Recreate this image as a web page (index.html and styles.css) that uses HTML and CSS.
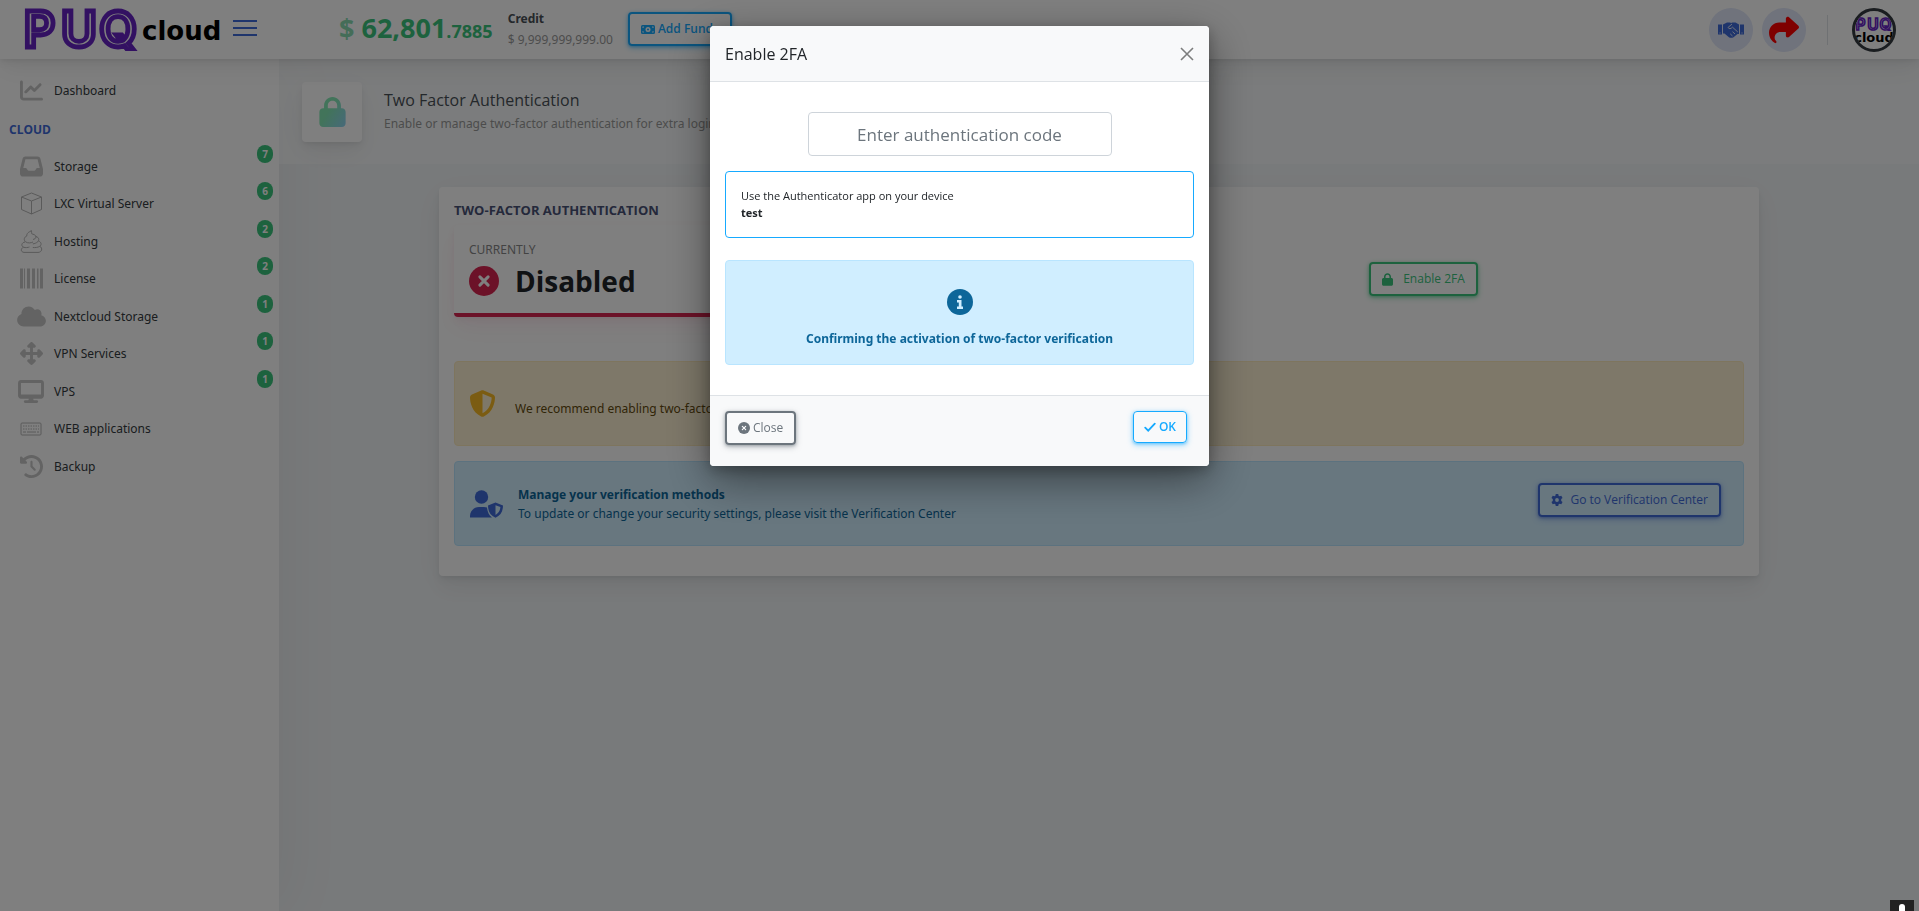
FILE: index.html
```html
<!DOCTYPE html>
<html lang="en">
<head>
<meta charset="utf-8">
<title>Two Factor Authentication</title>
<link rel="stylesheet" href="styles.css">
</head>
<body>
<svg class="defs" aria-hidden="true">
  <defs>
    <linearGradient id="lockfill" x1="0" y1="0.3" x2="1" y2="1"><stop offset="0.3" stop-color="#84e8b4"/><stop offset="1" stop-color="#8fd3f4"/></linearGradient>
    <symbol id="lock" viewBox="0 0 448 512"><path d="M144 144v48H304V144c0-44.200-35.800-80-80-80s-80 35.800-80 80zM80 192V144C80 64.500 144.500 0 224 0s144 64.500 144 144v48h16c35.300 0 64 28.700 64 64V448c0 35.300-28.700 64-64 64H64c-35.300 0-64-28.700-64-64V256c0-35.300 28.700-64 64-64H80z"/></symbol>
    <symbol id="xcircle" viewBox="0 0 24 24"><circle cx="12" cy="12" r="12"/><path d="M8.700 8.700l6.600 6.600M15.300 8.700l-6.600 6.600" fill="none" stroke="var(--hole)" stroke-width="2.400" stroke-linecap="round"/></symbol>
    <symbol id="logo" viewBox="0 0 124 46"><text class="logo-text" x="1 40 80" y="42">PUQ</text></symbol>
  </defs>
</svg>

<header class="header">
  <div class="brand">
    <a class="logo" href="#" aria-label="PUQcloud">
      <svg class="logo-mark" viewBox="0 0 124 46"><use href="#logo"/></svg>
      <span class="logo-word">cloud</span>
    </a>
    <button class="burger" aria-label="Toggle menu"><span></span><span></span><span></span></button>
  </div>
  <div class="balance">
    <div class="amount"><span class="currency">$</span> 62,801<small>.7885</small></div>
    <div class="credit"><b>Credit</b><span>$ 9,999,999,999.00</span></div>
    <button class="btn btn-info thick bold"><svg class="i-bill" viewBox="0 0 28 18"><rect width="28" height="18" rx="3"/><circle cx="14" cy="9" r="5" fill="#fff"/><path d="M3 3h3a3 3 0 0 1-3 3zM25 3v3a3 3 0 0 1-3-3zM3 15v-3a3 3 0 0 1 3 3zM25 15h-3a3 3 0 0 1 3-3z" fill="#fff"/><circle cx="14" cy="9" r="2"/></svg>Add Funds</button>
  </div>
  <div class="tools">
    <a class="round" href="#" aria-label="Partners"><svg class="i-hands" viewBox="0 0 26 16"><path d="M0 2.500h4v10H0zM22 2.500h4v10h-4z"/><path d="M5 2.500L9 .5h3l1 .6L14.500.5h3L21 2.500v9.500h-1.500l-4 3.200c-1.300.8-3 .8-4.300.2L6.500 11.500H5z"/><path d="M14 2L10 5.500c.8 1.800 3 1.300 4.500-.3L19.800 10M17 12l-2.500-2.300M14.500 14l-2.300-2.200" fill="none" stroke="#e0e6f8" stroke-width="1"/><path d="M1.500 10.500h1v1h-1zM23.500 10.500h1v1h-1z" fill="#e0e6f8"/></svg></a>
    <a class="round" href="#" aria-label="Share"><svg class="i-share" viewBox="0 0 512 512"><path d="M307 34.800c-11.500 5.100-19 16.600-19 29.200v64H176C78.800 128 0 206.800 0 304C0 417.300 81.500 467.900 100.200 478.100c2.500 1.400 5.300 1.900 8.100 1.900c10.900 0 19.700-8.900 19.700-19.700c0-7.500-4.300-14.400-9.800-19.500C108.800 431.900 96 414.400 96 384c0-53 43-96 96-96h96v64c0 12.600 7.400 24.100 19 29.200s25 3 34.400-5.400l160-144c6.700-6.100 10.600-14.700 10.600-23.800s-3.800-17.700-10.600-23.800l-160-144c-9.400-8.500-22.900-10.600-34.400-5.400z"/></svg></a>
    <span class="divider"></span>
    <a class="avatar" href="#" aria-label="Account"><svg viewBox="0 0 124 46"><use href="#logo"/></svg><span>cloud</span></a>
  </div>
</header>

<div class="shell">
  <nav class="sidebar">
    <a class="item" href="#"><span class="ico"><svg class="w23" viewBox="0 0 512 512"><path d="M64 64c0-17.700-14.300-32-32-32S0 46.300 0 64V400c0 44.200 35.800 80 80 80H480c17.700 0 32-14.300 32-32s-14.300-32-32-32H80c-8.800 0-16-7.200-16-16V64zm406.600 86.600c12.500-12.500 12.500-32.800 0-45.300s-32.800-12.500-45.300 0L320 210.700l-57.400-57.400c-12.500-12.500-32.800-12.500-45.300 0l-112 112c-12.500 12.500-12.500 32.800 0 45.300s32.800 12.500 45.300 0L240 221.300l57.400 57.400c12.500 12.500 32.800 12.500 45.300 0l128-128z"/></svg></span>Dashboard</a>
    <h2>CLOUD</h2>
    <div class="group">
      <a class="item" href="#"><span class="ico"><svg class="w23" viewBox="0 0 512 512"><path d="M121 32C91.600 32 66 52 58.900 80.500L1.900 308.400C.6 313.500 0 318.700 0 323.900V416c0 35.300 28.700 64 64 64H448c35.300 0 64-28.700 64-64V323.900c0-5.200-.6-10.400-1.900-15.500l-57-227.900C446 52 420.400 32 391 32H121zm0 64H391l48 192H387.800c-12.100 0-23.200 6.800-28.600 17.700l-14.300 28.600c-5.400 10.800-16.500 17.700-28.600 17.700H195.800c-12.100 0-23.200-6.800-28.600-17.700l-14.300-28.600c-5.400-10.800-16.500-17.700-28.600-17.700H73L121 96z"/></svg></span>Storage<span class="badge">7</span></a>
      <a class="item" href="#"><span class="ico"><svg class="w23 line" viewBox="0 0 23 23"><path d="M11.500 1L21.500 5v12.500l-10 4.500-10-4.500V5zM1.500 5l10 4 10-4M11.500 9v13"/></svg></span>LXC Virtual Server<span class="badge">6</span></a>
      <a class="item" href="#"><span class="ico"><svg class="w23 line" viewBox="0 0 23 23"><path d="M12 .8C8.500 1.800 6.500 3.500 6.800 6 4 7 3.500 10 5.500 11.800 8 13.500 11 13 13 12M11 .6C12.300 2 11 3 11.800 3.800c1.200.6 4 .7 4.200 3.200 0 1.500-1.500 2-3 2.500M16 6.500c3 .8 3.500 3.500 1.800 5.200-1.300 1.300-3.300 2-5 2.200M5 12C1.500 12.500.8 16 3.500 17.200 5.500 18 8 17.500 9.500 17M18.500 11c3 1 3.300 4 1.300 5.300-2 1.300-5 1.400-7 1.200M3.500 17.200C.5 18.500.5 22 4 22.400h14c4 0 5-4.500 1.800-6.100"/></svg></span>Hosting<span class="badge">2</span></a>
      <a class="item" href="#"><span class="ico"><svg class="w23" viewBox="0 0 23 23"><path d="M0 1.500h3v20H0zM4 1.500h1v20H4zM7 1.500h3v20H7zM12 1.500h3v20h-3zM17 1.500h1v20h-1zM20 1.500h3v20h-3zM18.500 1.500h.5v20h-.5z"/></svg></span>License<span class="badge">2</span></a>
      <a class="item" href="#"><span class="ico"><svg class="w29" viewBox="0 0 640 512"><path d="M0 336c0 79.500 64.500 144 144 144H512c70.700 0 128-57.300 128-128c0-61.900-44-113.600-102.400-125.400c4.100-10.700 6.400-22.400 6.400-34.600c0-53-43-96-96-96c-19.700 0-38.100 6-53.300 16.200C367 64.200 315.300 32 256 32C167.600 32 96 103.600 96 192c0 2.700.1 5.400.2 8.100C40.200 219.800 0 273.200 0 336z"/></svg></span>Nextcloud Storage<span class="badge">1</span></a>
      <a class="item" href="#"><span class="ico"><svg class="w23" viewBox="0 0 512 512"><path d="M278.600 9.400c-12.500-12.500-32.800-12.500-45.300 0l-64 64c-9.200 9.200-11.900 22.900-6.900 34.900s16.600 19.800 29.600 19.800h32v96H128V192c0-12.900-7.800-24.600-19.800-29.600s-25.700-2.200-34.900 6.900l-64 64c-12.500 12.500-12.500 32.800 0 45.300l64 64c9.200 9.200 22.900 11.900 34.900 6.900s19.800-16.600 19.800-29.600V288h96v96H192c-12.900 0-24.600 7.800-29.600 19.800s-2.200 25.700 6.900 34.900l64 64c12.500 12.500 32.800 12.500 45.300 0l64-64c9.200-9.200 11.900-22.900 6.900-34.900s-16.600-19.800-29.600-19.800H288V288h96v32c0 12.900 7.800 24.600 19.800 29.600s25.700 2.200 34.900-6.900l64-64c12.500-12.500 12.500-32.800 0-45.300l-64-64c-9.200-9.200-22.900-11.900-34.900-6.900s-19.800 16.600-19.800 29.600v32H288V128h32c12.900 0 24.600-7.800 29.600-19.800s2.200-25.700-6.900-34.900l-64-64z"/></svg></span>VPN Services<span class="badge">1</span></a>
      <a class="item" href="#"><span class="ico"><svg class="w26" viewBox="0 0 576 512"><path d="M64 0C28.700 0 0 28.700 0 64V352c0 35.300 28.700 64 64 64H240l-10.700 32H160c-17.700 0-32 14.300-32 32s14.300 32 32 32H416c17.700 0 32-14.300 32-32s-14.300-32-32-32H346.700L336 416H512c35.300 0 64-28.700 64-64V64c0-35.300-28.700-64-64-64H64zM512 64V320H64V64H512z"/></svg></span>VPS<span class="badge">1</span></a>
      <a class="item" href="#"><span class="ico"><svg class="w23 line" viewBox="0 0 23 23"><rect x="1" y="6" width="20" height="12" rx="1"/><path d="M3 9h16M3 12h16" stroke-dasharray="1.500 1"/><path d="M3 15h3M7 15h9M17 15h2"/></svg></span>WEB applications</a>
      <a class="item" href="#"><span class="ico"><svg class="w23" viewBox="0 0 512 512"><path d="M75 75L41 41C25.900 25.900 0 36.600 0 57.900V168c0 13.300 10.700 24 24 24H134.100c21.400 0 32.100-25.900 17-41l-30.800-30.800C155 85.500 203 64 256 64c106 0 192 86 192 192s-86 192-192 192c-40.800 0-78.600-12.700-109.700-34.400c-14.500-10.100-34.400-6.600-44.600 7.900s-6.600 34.400 7.900 44.600C151.200 495 201.700 512 256 512c141.400 0 256-114.600 256-256S397.400 0 256 0C185.300 0 121.300 28.700 75 75zm181 53c-13.300 0-24 10.700-24 24V256c0 6.400 2.500 12.500 7 17l72 72c9.400 9.400 24.600 9.400 33.900 0s9.400-24.600 0-33.900l-65-65V152c0-13.300-10.700-24-24-24z"/></svg></span>Backup</a>
    </div>
  </nav>

  <main class="main">
    <section class="page-title">
      <span class="title-icon"><svg><use href="#lock"/></svg></span>
      <div>
        <h1>Two Factor Authentication</h1>
        <p>Enable or manage two-factor authentication for extra login security</p>
      </div>
    </section>

    <section class="card">
      <h3>TWO-FACTOR AUTHENTICATION</h3>
      <div class="status-row">
        <div class="status">
          <span class="status-label">CURRENTLY</span>
          <div class="status-value"><svg><use href="#xcircle"/></svg>Disabled</div>
        </div>
        <div class="status-action"><button class="btn btn-success thick"><svg class="i-lock"><use href="#lock"/></svg>Enable 2FA</button></div>
      </div>
      <div class="alert warn">
        <svg class="i-shield" viewBox="16 0 480 512"><path d="M256 0c4.600 0 9.200 1 13.400 2.900L457.700 82.800c22 9.300 38.400 31 38.300 57.200c-.5 99.200-41.300 280.700-213.600 363.200c-16.700 8-36.100 8-52.800 0C57.300 420.700 16.500 239.200 16 140c-.1-26.200 16.300-47.900 38.300-57.200L242.700 2.900C246.800 1 251.400 0 256 0zm0 66.800V444.800C394 378 431.100 230.100 432 141.400L256 66.800z"/></svg>
        <p>We recommend enabling two-factor authentication for better account security</p>
      </div>
      <div class="alert info">
        <svg class="i-user" viewBox="0 0 33 28"><circle cx="11.500" cy="7" r="6.700"/><path d="M0 27.500v-1.500c0-5 4-9 9-9h5c1 0 2 .2 3 .5.300 4 2 7.800 5 10z"/><path fill-rule="evenodd" d="M25.500 12.500l7.500 3c0 6-2.500 10-7.500 12.300-5-2.300-7.500-6.300-7.500-12.300zM25.500 15.200v9.700c3-1.700 4.600-4.300 4.900-7.800z"/></svg>
        <p><b>Manage your verification methods</b><br>To update or change your security settings, please visit the Verification Center</p>
        <button class="btn btn-primary thick"><svg class="i-gear" viewBox="0 0 24 24"><path fill-rule="evenodd" d="M9.500 0h5l.7 3.500 2 1.200 3.400-1.200 2.500 4.300L20.400 10.200v3.600l2.700 2.400-2.500 4.300-3.400-1.200-2 1.200-.7 3.500h-5l-.7-3.500-2-1.200-3.400 1.200L.9 16.200l2.700-2.400v-3.600L.9 7.800l2.500-4.300 3.400 1.200 2-1.200zM12 8.200a3.800 3.800 0 1 0 0 7.600 3.800 3.800 0 0 0 0-7.600z"/></svg>Go to Verification Center</button>
      </div>
    </section>
  </main>
</div>

<div class="backdrop"></div>

<div class="modal-layer">
  <div class="modal" role="dialog" aria-modal="true" aria-labelledby="modal-title">
    <div class="modal-head">
      <h4 id="modal-title">Enable 2FA</h4>
      <button class="close-x" aria-label="Close"><svg viewBox="0 0 14 14"><path d="M1 1l12 12M13 1L1 13"/></svg></button>
    </div>
    <div class="modal-body">
      <input class="code" type="text" aria-label="Authentication code" placeholder="Enter authentication code">
      <div class="hint">Use the Authenticator app on your device<br><b>test</b></div>
      <div class="notice">
        <svg viewBox="0 0 26 26"><circle cx="13" cy="13" r="13"/><path d="M10 11h4.500v6.500H16V20h-6v-2.500h1.800v-4H10z" fill="#d0eeff"/><circle cx="13" cy="8" r="1.800" fill="#d0eeff"/></svg>
        <b>Confirming the activation of two-factor verification</b>
      </div>
    </div>
    <div class="modal-foot">
      <button class="btn btn-secondary thick"><svg class="i-x"><use href="#xcircle"/></svg>Close</button>
      <button class="btn btn-info bold ok"><svg class="i-check" viewBox="0 0 12 12"><path d="M1.200 6.600l3 3 6.600-7" fill="none" stroke="currentColor" stroke-width="1.800" stroke-linecap="round"/></svg>OK</button>
    </div>
  </div>
</div>

<div class="corner"><svg viewBox="0 0 6 12"><rect width="6" height="16" rx="3"/></svg></div>
</body>
</html>
```
FILE: styles.css
```css
* { box-sizing: border-box; }
body {
  margin: 0;
  min-height: 100vh;
  overflow: hidden;
  display: flex;
  flex-direction: column;
  background: #f1f4f6;
  color: #212529;
  font: 12px/18px "Noto Sans", "Open Sans", sans-serif;
}
h1, h2, h3, h4, p { margin: 0; font-size: inherit; }
a { color: inherit; text-decoration: none; }
svg { fill: currentColor; flex: none; display: block; }
.defs { position: absolute; width: 0; height: 0; }

/* Header */
.header {
  position: relative;
  z-index: 2;
  display: flex;
  height: 59px;
  background: #fff;
  box-shadow: 0 7px 33px rgba(4, 9, 20, .03), 0 14px 21px rgba(4, 9, 20, .03), 0 4px 8px rgba(4, 9, 20, .05), 0 2px 3px rgba(4, 9, 20, .03);
}
.brand {
  width: 279px;
  padding: 0 22px;
  display: flex;
  justify-content: space-between;
  align-items: flex-start;
}
.logo { display: flex; padding-top: 7px; }
.logo-mark { width: 120px; height: 44px; }
.logo-text {
  font: 600 51px Inter, sans-serif;
  fill: #fff;
  stroke: #6622c4;
  stroke-width: 5px;
}
.logo-word { font: bold 26px/42px "DejaVu Sans", sans-serif; color: #000; padding-top: 3px; }
.burger {
  display: flex;
  flex-direction: column;
  gap: 5px;
  width: 24px;
  margin-top: 20px;
  padding: 0;
  border: 0;
  background: none;
}
.burger span { width: 24px; height: 2px; background: #3f6ad8; }
.balance {
  display: flex;
  align-items: center;
  margin-left: 38px;
  padding: 0 22px;
  height: 58px;
  border-radius: 15px;
}
.amount { font: 700 27px/36px "Open Sans", "Noto Sans", sans-serif; color: #3ac47d; margin-right: 15px; }
.amount small { font-size: 18px; }
.currency { opacity: .6; }
.credit { display: flex; flex-direction: column; gap: 3px; margin-right: 15px; color: #495057; }
.credit span { color: #999; }
.tools { display: flex; align-items: center; margin-left: auto; padding-right: 23px; }
.round {
  width: 44px;
  height: 44px;
  margin-right: 9px;
  border-radius: 50%;
  background: #e0e6f8;
  display: grid;
  place-items: center;
}
.i-hands { width: 26px; height: 16px; fill: #3f6ad8; }
.i-share { width: 30px; height: 30px; fill: #f00; }
.divider { width: 1px; height: 30px; margin: 0 24px 0 12px; background: #dee2e6; }
.avatar {
  width: 44px;
  height: 44px;
  border: 3px solid #343a40;
  border-radius: 50%;
  overflow: hidden;
  display: flex;
  flex-direction: column;
  align-items: center;
  color: #000;
  font: bold 13px/14px "DejaVu Sans", sans-serif;
}
.avatar svg { width: 38px; height: 14px; margin-top: 6px; }

/* Sidebar */
.shell { display: flex; flex: 1; }
.sidebar {
  width: 279px;
  padding-top: 13px;
  background: #fff;
  box-shadow: 7px 0 60px rgba(8, 10, 12, .05);
}
.item {
  position: relative;
  display: flex;
  align-items: center;
  height: 37px;
  padding-left: 15px;
  color: #343a40;
}
.group .item:nth-child(even) { margin-bottom: 1px; }
.ico { width: 32px; margin-right: 7px; display: grid; place-items: center; color: #c6c6c6; }
.w23 { width: 23px; height: 23px; }
.w26 { width: 26px; height: 23px; }
.w29 { width: 29px; height: 23px; }
.line { fill: none; stroke: #b4b4b4; stroke-width: 1; }
.sidebar h2 { padding: 12px 9px 0; height: 39px; font: 700 12px/18px "Open Sans", "Noto Sans", sans-serif; color: #3f6ad8; }
.badge {
  position: absolute;
  right: 6px;
  top: -3px;
  width: 16px;
  height: 18px;
  border-radius: 9px;
  background: #3ac47d;
  color: #fff;
  font-size: 10px;
  font-weight: 700;
  text-align: center;
}

/* Main */
.main { flex: 1; min-width: 0; }
.page-title {
  display: flex;
  align-items: center;
  gap: 22px;
  height: 105px;
  padding: 0 23px;
  background: rgba(255, 255, 255, .45);
}
.title-icon {
  width: 60px;
  height: 60px;
  border-radius: 4px;
  background: #fff;
  display: grid;
  place-items: center;
  box-shadow: 0 7px 33px rgba(4, 9, 20, .03), 0 14px 21px rgba(4, 9, 20, .03), 0 4px 8px rgba(4, 9, 20, .05), 0 2px 3px rgba(4, 9, 20, .03);
}
.title-icon svg { width: 27px; height: 30px; fill: url(#lockfill); }
.page-title h1 { font: 400 16px/24px "Open Sans", "Noto Sans", sans-serif; color: #495057; }
.page-title p { line-height: 24px; color: #999; }
.card {
  max-width: 1320px;
  margin: 23px auto 0;
  padding: 15px;
  border-radius: 4px;
  background: #fff;
  box-shadow: 0 7px 33px rgba(4, 9, 20, .03), 0 14px 21px rgba(4, 9, 20, .03), 0 4px 8px rgba(4, 9, 20, .05), 0 2px 3px rgba(4, 9, 20, .03);
}
.card h3 { font: 700 13px/16px "Open Sans", "Noto Sans", sans-serif; color: #495277; }
.status-row { display: grid; grid-template-columns: 1fr 1fr; gap: 8px; padding: 7px 0 44px; }
.status {
  height: 92px;
  padding: 16px 15px 0;
  border-bottom: 4px solid #d92550;
  border-radius: 4px;
  box-shadow: 0 7px 33px rgba(217, 37, 80, .03), 0 14px 21px rgba(217, 37, 80, .03), 0 4px 8px rgba(217, 37, 80, .05), 0 2px 3px rgba(217, 37, 80, .03);
}
.status-label { color: #868686; }
.status-value { display: flex; align-items: center; gap: 16px; height: 44px; font: 700 28px/44px "Open Sans", "Noto Sans", sans-serif; }
.status-value svg { width: 30px; height: 30px; color: #d92550; --hole: #fff; }
.status-action { padding-top: 37px; text-align: center; }
.alert {
  display: flex;
  align-items: center;
  height: 85px;
  margin-bottom: 15px;
  padding: 0 22px 0 15px;
  border: 1px solid;
  border-radius: 4px;
}
.warn { background: #fdf1d3; border-color: #fceabd; color: #634a0e; }
.warn p { padding-top: 11px; }
.info { background: #d0eeff; border-color: #b9e5ff; color: #0d6699; }
.info p { line-height: 19px; }
.info .btn { margin: 0 0 8px auto; }
.i-shield { width: 25px; height: 27px; margin-right: 20px; color: #f7b924; }
.i-user { width: 33px; height: 28px; margin-right: 15px; color: #3f6ad8; }

/* Buttons */
.btn {
  display: inline-flex;
  align-items: center;
  padding: 0 11px;
  height: 32px;
  border: 1px solid currentColor;
  border-radius: 4px;
  background: none;
  font: 400 12px/18px "Open Sans", "Noto Sans", sans-serif;
}
.thick { border-width: 2px; height: 34px; }
.bold { font-weight: 600; }
.btn-info { color: #16aaff; box-shadow: 0 2px 6px rgba(22, 170, 255, .4), 0 1px 3px rgba(22, 170, 255, .5); }
.btn-success { color: #3ac47d; box-shadow: 0 2px 6px rgba(58, 196, 125, .4), 0 1px 3px rgba(58, 196, 125, .5); }
.btn-primary { color: #3f6ad8; box-shadow: 0 2px 6px rgba(63, 106, 216, .4), 0 1px 3px rgba(63, 106, 216, .5); }
.btn-secondary { color: #6c757d; box-shadow: 0 2px 6px rgba(108, 117, 125, .4), 0 1px 3px rgba(108, 117, 125, .5); }
.i-bill { width: 14px; height: 9px; margin-right: 3px; }
.i-lock { width: 11px; height: 13px; margin-right: 10px; }
.i-gear { width: 12px; height: 12px; margin-right: 7px; }
.i-x { width: 12px; height: 12px; margin-right: 3px; --hole: #f8f9fa; }
.i-check { width: 12px; height: 12px; margin-right: 3px; }

/* Modal */
.backdrop { position: fixed; inset: 0; z-index: 5; background: rgba(0, 0, 0, .5); }
.modal-layer { position: fixed; inset: 0; z-index: 6; display: flex; justify-content: center; align-items: flex-start; padding-top: 26px; }
.modal {
  width: 499px;
  border-radius: 4px;
  background: #fff;
  overflow: hidden;
  box-shadow: 0 14px 44px rgba(0, 0, 0, .45), 0 4px 14px rgba(0, 0, 0, .25);
}
.modal-head {
  display: flex;
  justify-content: space-between;
  align-items: center;
  height: 56px;
  padding: 0 15px;
  background: #f8f9fa;
  border-bottom: 1px solid #dee2e6;
}
.modal-head h4 { font: 400 16px/24px "Open Sans", "Noto Sans", sans-serif; }
.close-x { width: 14px; height: 14px; padding: 0; border: 0; background: none; color: #7c7d7d; }
.close-x path { fill: none; stroke: currentColor; stroke-width: 1.6; }
.modal-body { padding: 30px 15px; }
.code {
  display: block;
  width: 304px;
  height: 44px;
  margin: 0 auto 15px;
  border: 1px solid #ced4da;
  border-radius: 4px;
  text-align: center;
  font: 17px "Open Sans", "Noto Sans", sans-serif;
}
.code::placeholder { color: #6c757d; opacity: 1; }
.hint {
  height: 67px;
  padding: 15px;
  border: 1px solid #16aaff;
  border-radius: 4px;
  font: 11px/17px "Open Sans", "Noto Sans", sans-serif;
}
.notice {
  display: flex;
  flex-direction: column;
  align-items: center;
  gap: 15px;
  height: 105px;
  margin-top: 22px;
  padding-top: 28px;
  border: 1px solid #b9e5ff;
  border-radius: 4px;
  background: #d0eeff;
  color: #0d6699;
}
.notice svg { width: 26px; height: 26px; }
.modal-foot {
  display: flex;
  justify-content: space-between;
  align-items: flex-start;
  height: 71px;
  padding: 15px;
  border-top: 1px solid #dee2e6;
  background: #f8f9fa;
}
.ok { margin-right: 7px; padding: 0 10px; }

/* Corner widget */
.corner {
  position: fixed;
  z-index: 7;
  right: 5px;
  bottom: 0;
  width: 24px;
  height: 11px;
  padding-top: 4px;
  overflow: hidden;
  background: #222;
  color: #fff;
}
.corner svg { width: 6px; height: 12px; margin: 0 auto; }
```
